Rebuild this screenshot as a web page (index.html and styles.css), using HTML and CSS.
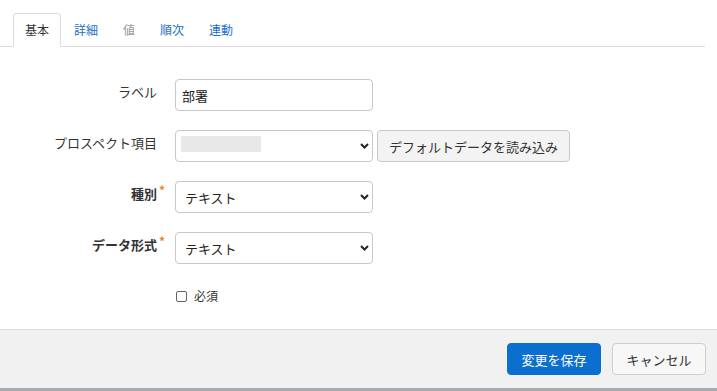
FILE: index.html
```html
<!DOCTYPE html>
<html lang="ja">
<head>
<meta charset="utf-8">
<link rel="stylesheet" href="styles.css">
</head>
<body>
<div class="page">
  <nav class="tabs">
    <span class="tab active">基本</span>
    <span class="tab">詳細</span>
    <span class="tab disabled">値</span>
    <span class="tab">順次</span>
    <span class="tab">連動</span>
  </nav>

  <form class="form">
    <div class="row">
      <label class="label">ラベル</label>
      <div class="input">部署</div>
    </div>
    <div class="row">
      <label class="label">プロスペクト項目</label>
      <div class="field-group">
        <div class="select">
          <span class="blur"></span>
          <svg class="chev" width="9" height="6" viewBox="0 0 9 6"><path d="M1 1 L4.5 4.5 L8 1" fill="none" stroke="#222" stroke-width="2"/></svg>
        </div>
        <button type="button" class="btn btn-default">デフォルトデータを読み込み</button>
      </div>
    </div>
    <div class="row">
      <label class="label required">種別</label>
      <div class="select">
        <span>テキスト</span>
        <svg class="chev" width="9" height="6" viewBox="0 0 9 6"><path d="M1 1 L4.5 4.5 L8 1" fill="none" stroke="#222" stroke-width="2"/></svg>
      </div>
    </div>
    <div class="row">
      <label class="label required">データ形式</label>
      <div class="select">
        <span>テキスト</span>
        <svg class="chev" width="9" height="6" viewBox="0 0 9 6"><path d="M1 1 L4.5 4.5 L8 1" fill="none" stroke="#222" stroke-width="2"/></svg>
      </div>
    </div>
    <div class="row check-row">
      <span class="label"></span>
      <label class="check"><span class="box"></span>必須</label>
    </div>
  </form>

  <footer class="footer">
    <button type="button" class="btn btn-primary">変更を保存</button>
    <button type="button" class="btn btn-cancel">キャンセル</button>
  </footer>
</div>
</body>
</html>
```

FILE: styles.css
```css
* { box-sizing: border-box; }
html, body { margin: 0; padding: 0; background: #fff; }
body {
  font-family: "Noto Sans CJK JP", "Noto Sans", sans-serif;
  font-size: 13px;
  color: #333;
  width: 717px;
  height: 391px;
  overflow: hidden;
}
.page { display: flex; flex-direction: column; height: 391px; }

.tabs {
  display: flex;
  align-items: flex-end;
  width: 705px;
  height: 47px;
  padding-left: 13px;
  border-bottom: 1px solid #dcdcdc;
}
.tab {
  display: flex;
  align-items: center;
  height: 34px;
  margin-bottom: -1px;
  padding: 0 11px 2px;
  border: 1px solid transparent;
  border-radius: 4px 4px 0 0;
  font-size: 12px;
  color: #1d6ec5;
  margin-right: 1px;
}
.tab.active {
  color: #333;
  border-color: #dcdcdc;
  border-bottom-color: #fff;
  background: #fff;
}
.tab.disabled { color: #999; }

.form {
  flex: 1;
  padding-top: 32px;
}
.row {
  display: flex;
  align-items: flex-start;
  gap: 18px;
  margin-bottom: 19px;
}
.label {
  position: relative;
  width: 157px;
  flex: none;
  text-align: right;
  padding-top: 4px;
  line-height: 18px;
  font-size: 13px;
  color: #333;
}
.label.required { font-weight: bold; }
.label.required::after {
  content: "*";
  position: absolute;
  right: -8px;
  top: 0;
  font-size: 12px;
  color: #ef7d2a;
  font-weight: bold;
}
.input, .select {
  width: 198px;
  height: 32px;
  border: 1px solid #c8c8c8;
  border-radius: 4px;
  background: #fff;
  display: flex;
  align-items: center;
  font-size: 13px;
  color: #222;
}
.input { padding: 0 6px; }
.select { justify-content: space-between; padding: 0 3px 0 9px; }
.chev { display: block; }
.blur {
  display: block;
  width: 80px;
  height: 16px;
  margin-left: -4px;
  margin-bottom: 5px;
  background: #e8e8e8;
}
.field-group { display: flex; gap: 4px; }

.btn {
  font-family: inherit;
  font-size: 13px;
  height: 32px;
  border-radius: 4px;
  cursor: pointer;
}
.btn-default {
  background: #f3f3f3;
  border: 1px solid #c8c8c8;
  color: #333;
  padding: 0 11px;
}

.check-row { margin-top: 23px; }
.check {
  display: flex;
  align-items: center;
  gap: 7px;
  line-height: 18px;
  padding-top: 0;
  font-size: 12px;
  color: #333;
  margin-left: 1px;
}
.box {
  width: 11px;
  height: 11px;
  border: 1px solid #666;
  border-radius: 2px;
  background: #fff;
}

.footer {
  display: flex;
  justify-content: flex-end;
  gap: 11px;
  height: 62px;
  padding: 13px 11px 0 0;
  background: #f2f1f1;
  border-top: 1px solid #dcdcdc;
  border-bottom: 3px solid #a7aaae;
}
.footer .btn { width: 94px; height: 32px; padding: 0; }
.btn-primary {
  background: #0b6fd0;
  border: 1px solid #0b6fd0;
  color: #fff;
}
.btn-cancel {
  background: #f7f7f7;
  border: 1px solid #cfcfcf;
  color: #333;
}
```
